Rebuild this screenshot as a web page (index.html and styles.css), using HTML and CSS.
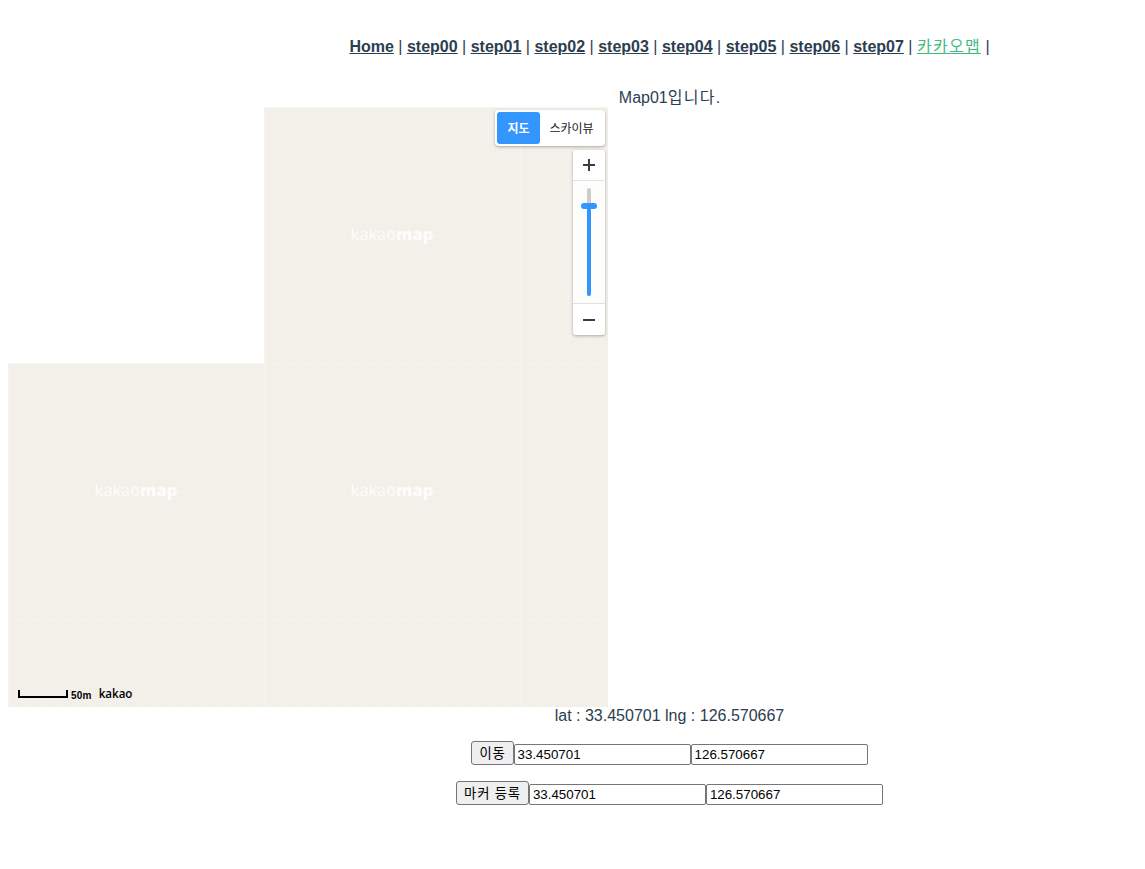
FILE: index.html
```html
<!DOCTYPE html>
<html lang="ko">
<head>
<meta charset="utf-8">
<title>Map01</title>
<link rel="stylesheet" href="styles.css">
</head>
<body>
<div id="app">
  <div class="nav">
    <a href="#">Home</a> | <a href="#">step00</a> | <a href="#">step01</a> | <a href="#">step02</a> | <a href="#">step03</a> | <a href="#">step04</a> | <a href="#">step05</a> | <a href="#">step06</a> | <a href="#">step07</a> | <a href="#" class="active ko">카카오맵</a> |
  </div>
  <div class="title">Map01<span class="ko">입니다</span>.</div>
  <div class="map">
    <div class="tiles">
      <div class="tile blank"></div>
      <div class="tile"><span class="mark">kakao<b>map</b></span></div>
      <div class="tile"></div>
      <div class="tile"><span class="mark">kakao<b>map</b></span></div>
      <div class="tile"><span class="mark">kakao<b>map</b></span></div>
      <div class="tile"></div>
      <div class="tile"></div>
      <div class="tile"></div>
      <div class="tile"></div>
    </div>
    <div class="type-ctrl">
      <div class="type-btn on">지도</div>
      <div class="type-btn">스카이뷰</div>
    </div>
    <div class="zoom-ctrl">
      <div class="zoom-btn">
        <svg width="14" height="14" viewBox="0 0 14 14"><path d="M7 1v12M1 7h12" stroke="#3c3c3c" stroke-width="2" fill="none"/></svg>
      </div>
      <div class="slider">
        <div class="slider-fill"></div>
        <div class="slider-knob"></div>
      </div>
      <div class="zoom-btn minus">
        <svg width="14" height="14" viewBox="0 0 14 14"><path d="M1 7h12" stroke="#3c3c3c" stroke-width="2" fill="none"/></svg>
      </div>
    </div>
    <div class="scale">
      <div class="scale-bar"></div>
      <span class="scale-num">50m</span>
      <span class="scale-logo">kakao</span>
    </div>
  </div>
  <p class="coords">lat : 33.450701 lng : 126.570667</p>
  <p class="row">
    <button>이동</button><input type="text" value="33.450701"><input type="text" value="126.570667">
  </p>
  <p class="row">
    <button>마커 등록</button><input type="text" value="33.450701"><input type="text" value="126.570667">
  </p>
</div>
</body>
</html>
```

FILE: styles.css
```css
body {
  margin: 8px;
  background-color: #fff;
}
#app {
  font-family: "Liberation Sans", Arial, "Noto Sans CJK KR", sans-serif;
  font-size: 16px;
  line-height: 18px;
  color: #2c3e50;
}
.ko {
  letter-spacing: 1.28px;
}
.nav {
  padding: 30px 0 33px 194px;
  text-align: center;
}
.nav a {
  font-weight: bold;
  color: #2c3e50;
}
.nav a.active {
  color: #42b983;
  font-weight: normal;
}
.title {
  padding-left: 194px;
  height: 18px;
  text-align: center;
}
.map {
  position: relative;
  width: 600px;
  height: 600px;
  overflow: hidden;
}
.tiles {
  display: grid;
  grid-template-columns: repeat(3, 256px);
  grid-auto-rows: 256px;
}
.tile {
  display: flex;
  align-items: center;
  justify-content: center;
  padding-bottom: 3px;
  box-sizing: border-box;
  background-color: #f3f0ea;
  background-image:
    linear-gradient(#f4f2ed 1px, transparent 1px),
    linear-gradient(90deg, #f4f2ed 1px, transparent 1px);
  background-size: 16px 16px;
  box-shadow: inset 1px 1px 0 #f6f4f0;
}
.tile.blank {
  background: #fff;
  box-shadow: none;
}
.mark {
  font-family: "Open Sans", sans-serif;
  font-size: 16.4px;
  color: #fff;
  opacity: .8;
}
.mark b {
  font-weight: 800;
}
.type-ctrl {
  position: absolute;
  top: 3px;
  right: 3px;
  display: flex;
  width: 106px;
  height: 32px;
  padding: 2px;
  background: #fff;
  border-radius: 4px;
  box-shadow: 0 1px 3px rgba(0,0,0,.3);
}
.type-btn {
  flex: 1;
  font-family: "Noto Sans CJK KR", sans-serif;
  font-size: 12px;
  line-height: 32px;
  text-align: center;
  color: #222;
}
.type-btn.on {
  flex: none;
  width: 43px;
  background: #3396ff;
  color: #fff;
  font-weight: bold;
  border-radius: 3px;
}
.zoom-ctrl {
  position: absolute;
  top: 43px;
  right: 3px;
  width: 32px;
  background: #fff;
  border-radius: 3px;
  box-shadow: 0 1px 3px rgba(0,0,0,.3);
}
.zoom-btn {
  display: flex;
  align-items: center;
  justify-content: center;
  height: 30px;
  border-bottom: 1px solid #e2e2e2;
}
.zoom-btn.minus {
  height: 31px;
  border-bottom: 0;
  border-top: 1px solid #e2e2e2;
}
.slider {
  position: relative;
  height: 122px;
  background: #fdfdfc;
}
.slider::before {
  content: "";
  position: absolute;
  top: 7px;
  bottom: 7px;
  left: 14px;
  width: 4px;
  border-radius: 2px;
  background: #ccc;
}
.slider-fill {
  position: absolute;
  top: 26px;
  bottom: 7px;
  left: 14px;
  width: 4px;
  border-radius: 2px;
  background: #3396ff;
}
.slider-knob {
  position: absolute;
  top: 22px;
  left: 8px;
  width: 16px;
  height: 6px;
  border-radius: 3px;
  background: #3396ff;
}
.scale {
  position: absolute;
  left: 10px;
  bottom: 9px;
  display: flex;
  align-items: flex-end;
  color: #000;
}
.scale-bar {
  width: 46px;
  height: 6px;
  border: 2px solid #000;
  border-top: 0;
}
.scale-num {
  margin-left: 3px;
  font-size: 10px;
  line-height: 10px;
  font-weight: bold;
  letter-spacing: .2px;
  transform: translateY(3px);
}
.scale-logo {
  margin-left: 7px;
  font-family: "Open Sans", sans-serif;
  font-size: 11.6px;
  line-height: 14px;
  font-weight: 600;
  transform: translateY(3px);
}
.coords {
  margin: 0;
  padding-left: 194px;
  text-align: center;
}
.row {
  display: flex;
  align-items: flex-end;
  justify-content: center;
  margin: 16px 0;
  padding-left: 194px;
}
.row button {
  height: 24px;
  padding: 2px 7px 0;
  font-family: "Liberation Sans", Arial, "Noto Sans CJK KR", sans-serif;
  font-size: 13.33px;
  line-height: 18px;
  letter-spacing: .8px;
  color: #000;
  background: #efefef;
  border: 1px solid #767676;
  border-radius: 3px;
}
.row input {
  box-sizing: border-box;
  width: 177px;
  height: 21px;
  padding: 1px 3px;
  font-family: "Liberation Sans", Arial, sans-serif;
  font-size: 13.33px;
  color: #000;
  background: #fff;
  border: 1px solid #767676;
  border-radius: 2px;
}
```
